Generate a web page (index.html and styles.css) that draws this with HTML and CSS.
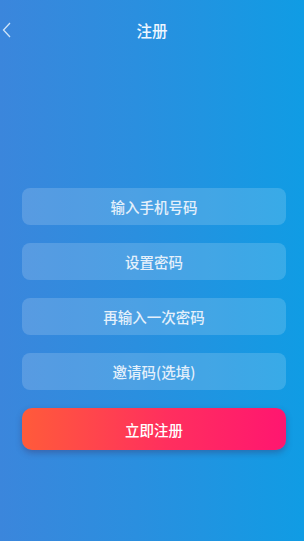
FILE: index.html
```html
<!DOCTYPE html>
<html lang="zh">
<head>
  <meta charset="UTF-8">
  <meta name="viewport" content="width=device-width, initial-scale=1.0">
  <title>注册</title>
  <link rel="stylesheet" href="styles.css">
</head>
<body>
  <div class="header">
    <span class="back">
      <svg width="9" height="16" viewBox="0 0 9 16"><path d="M8 1 L1.5 8 L8 15" fill="none" stroke="#cfe4f8" stroke-width="1.3"/></svg>
    </span>
    <h1>注册</h1>
  </div>

  <form class="form">
    <input class="field" type="text" placeholder="输入手机号码">
    <input class="field" type="password" placeholder="设置密码">
    <input class="field" type="password" placeholder="再输入一次密码">
    <input class="field" type="text" placeholder="邀请码(选填)">
    <button class="submit" type="button">立即注册</button>
  </form>
</body>
</html>
```

FILE: styles.css
```css
* {
  margin: 0;
  padding: 0;
  box-sizing: border-box;
}

body {
  font-family: "Noto Sans CJK SC", "Noto Sans", sans-serif;
  background: linear-gradient(90deg, #3b86dc 0%, #2a8fdf 45%, #109ce4 100%);
  color: #fff;
  height: 541px;
  overflow: hidden;
}

.header {
  height: 60px;
  display: flex;
  align-items: center;
  justify-content: center;
  position: relative;
}

.header h1 {
  font-size: 15.5px;
  font-weight: 500;
  color: #eef6ff;
}

.back {
  position: absolute;
  left: 2px;
  top: 22px;
  display: flex;
}

.form {
  display: flex;
  flex-direction: column;
  gap: 18px;
  padding: 128px 18px 0 22px;
}

.field {
  height: 37px;
  width: 264px;
  border: none;
  border-radius: 8px;
  background: rgba(255, 255, 255, 0.16);
  font-family: inherit;
  font-size: 14.5px;
  font-weight: 500;
  text-align: center;
  outline: none;
  color: #fff;
}

.field::placeholder {
  color: #e4f0fb;
}

.submit {
  height: 42px;
  width: 264px;
  border: none;
  border-radius: 10px;
  background: linear-gradient(90deg, #ff5b3a 0%, #ff2f5e 55%, #ff1670 100%);
  box-shadow: 0 3px 6px rgba(60, 40, 90, 0.35);
  color: #fff;
  font-family: inherit;
  font-size: 14.5px;
  font-weight: 500;
  cursor: pointer;
}
```
